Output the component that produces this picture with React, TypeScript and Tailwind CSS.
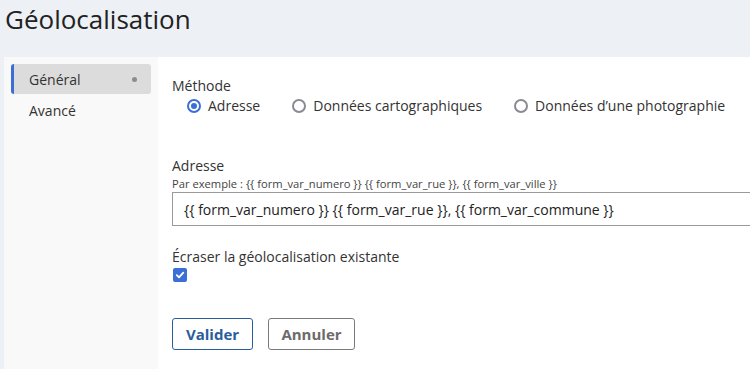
import React from "react";

function Radio({ checked, label }: { checked?: boolean; label: string }) {
  return (
    <label className="flex items-center gap-[7px] whitespace-nowrap">
      {checked ? (
        <span className="w-[14px] h-[14px] rounded-full border-2 border-[#3b6fd6] flex items-center justify-center">
          <span className="w-[6px] h-[6px] rounded-full bg-[#3b6fd6]" />
        </span>
      ) : (
        <span className="w-[14px] h-[14px] rounded-full border-2 border-[#8a8a94]" />
      )}
      <span>{label}</span>
    </label>
  );
}

export default function App() {
  return (
    <div className="w-[750px] h-[369px] bg-[#edf0f4] overflow-hidden text-[#333] font-['Open_Sans',sans-serif]">
      <div className="h-[57px] pl-[5px] pt-[1px]">
        <h1 className="text-[26px] leading-[36px] text-[#222] font-normal">Géolocalisation</h1>
      </div>
      <div className="ml-[4px] flex h-[312px]">
        <div className="w-[154px] shrink-0 bg-[#f9f9f9] pt-[7px] pl-[7px] pr-[7px] flex flex-col">
          <div className="h-[30px] bg-[#dcdcdc] rounded-[3px] border-l-[3px] border-[#3b6fd6] flex items-center pl-[15px] pr-[14px] justify-between text-[14px]">
            <span>Général</span>
            <span className="w-[5px] h-[5px] rounded-full bg-[#8c8c8c]" />
          </div>
          <div className="h-[32px] flex items-center pl-[18px] text-[14px]">Avancé</div>
        </div>
        <div className="flex-1 min-w-0 bg-white pl-[14px] pt-[19px]">
          <div className="text-[14px] leading-[20px]">Méthode</div>
          <div className="flex items-center gap-[32px] pl-[15px] text-[14px] leading-[20px] mt-[0px]">
            <Radio checked label="Adresse" />
            <Radio label="Données cartographiques" />
            <Radio label="Données d’une photographie" />
          </div>
          <div className="mt-[40px] text-[14px] leading-[20px]">Adresse</div>
          <div className="text-[11.2px] leading-[14px] text-[#444] whitespace-nowrap mt-[1px]">
            Par exemple : {"{{ form_var_numero }} {{ form_var_rue }}, {{ form_var_ville }}"}
          </div>
          <div className="mt-[1px] h-[34px] border border-[#9a9a9a] border-r-0 flex items-center pl-[11px] text-[14px] text-[#222] whitespace-nowrap">
            {"{{ form_var_numero }} {{ form_var_rue }}, {{ form_var_commune }}"}
          </div>
          <div className="mt-[21px] text-[14px] leading-[20px]">Écraser la géolocalisation existante</div>
          <div className="mt-[1px] w-[14px] h-[14px] rounded-[2px] bg-[#3b6fd6] flex items-center justify-center ml-[1px]">
            <svg width="10" height="10" viewBox="0 0 10 10">
              <path d="M1.8 5.2 L4 7.3 L8.3 2.6" stroke="white" strokeWidth="1.8" fill="none" strokeLinecap="round" strokeLinejoin="round" />
            </svg>
          </div>
          <div className="mt-[36px] flex gap-[15px]">
            <button className="w-[81px] h-[32px] border border-[#2a5d9c] rounded-[3px] text-[#2a5d9c] font-bold text-[15px]">
              Valider
            </button>
            <button className="w-[87px] h-[32px] border border-[#7a7a7a] rounded-[3px] text-[#6b6b6b] font-bold text-[15px]">
              Annuler
            </button>
          </div>
        </div>
      </div>
    </div>
  );
}
